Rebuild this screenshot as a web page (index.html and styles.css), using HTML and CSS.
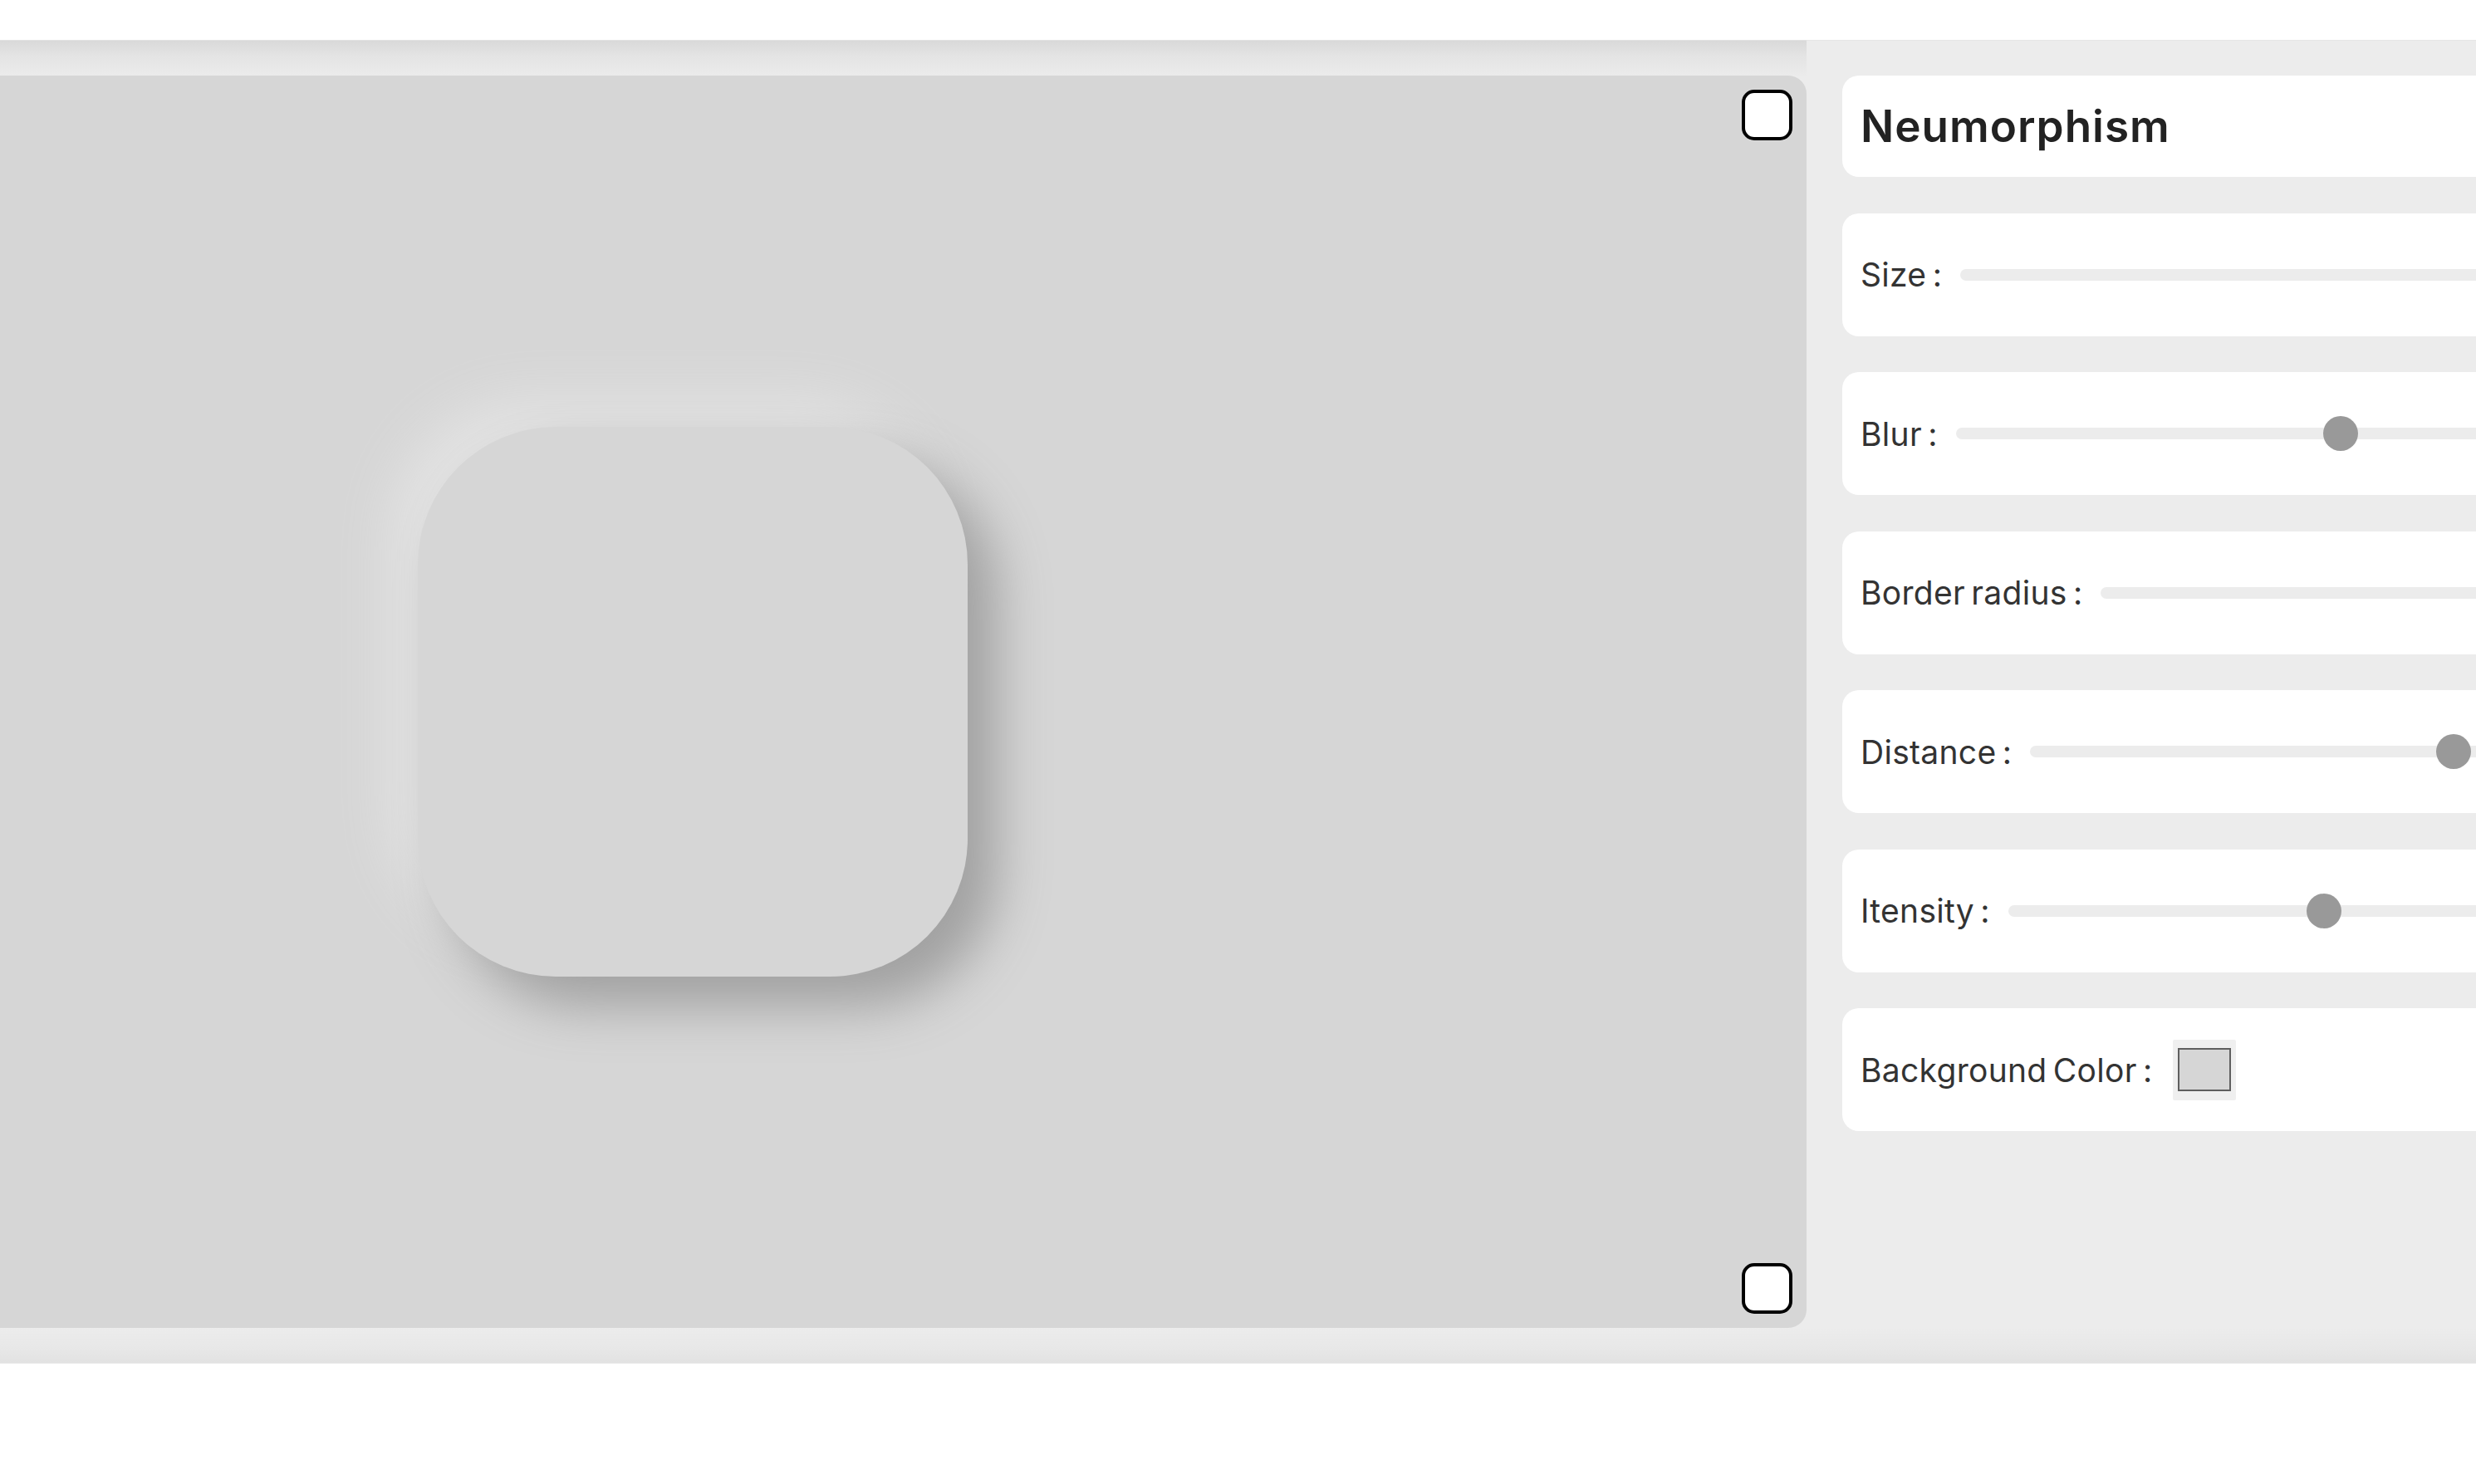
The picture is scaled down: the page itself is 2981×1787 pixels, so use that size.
FILE: index.html
```html
<!DOCTYPE html>
<html lang="en">
<head>
<meta charset="utf-8">
<title>Neumorphism</title>
<link rel="stylesheet" href="styles.css">
</head>
<body>
<div class="app">
  <div class="shade-top"></div>
  <div class="shade-top-right"></div>
  <main class="stage">
    <div class="neu"></div>
    <input type="checkbox" class="corner corner-top" aria-label="top corner">
    <input type="checkbox" class="corner corner-bottom" aria-label="bottom corner">
  </main>
  <aside class="panel">
    <div class="card card-title"><h1 class="title">Neumorphism</h1></div>
    <div class="card"><label class="label">Size :</label><input class="slider" type="range" min="0" max="1000" value="800"></div>
    <div class="card"><label class="label">Blur :</label><input class="slider" type="range" min="0" max="1000" value="516"></div>
    <div class="card"><label class="label">Border radius :</label><input class="slider" type="range" min="0" max="1000" value="700"></div>
    <div class="card"><label class="label">Distance :</label><input class="slider" type="range" min="0" max="1000" value="570"></div>
    <div class="card"><label class="label">Itensity :</label><input class="slider" type="range" min="0" max="1000" value="418"></div>
    <div class="card"><label class="label label-color">Background Color :</label><input class="swatch" type="color" value="#d6d6d6"></div>
  </aside>
  <div class="shade-bottom"></div>
</div>
</body>
</html>
```

FILE: styles.css
```css
html, body {
  margin: 0;
  padding: 0;
  background: #ffffff;
  overflow: hidden;
}

body {
  font-family: "Inter", "Open Sans", sans-serif;
  width: 2981px;
  height: 1787px;
}

.app {
  margin-top: 48px;
  display: grid;
  grid-template-columns: 2175px 1400px;
  grid-template-rows: 43px 1508px 43px;
  background: #ececec;
  width: 3575px;
}

.shade-top {
  background: linear-gradient(to bottom, #d9d9d9 0%, #e4e4e4 45%, #ebebeb 100%);
  border-top: 1px solid #e2e2e2;
}

.shade-top-right {
  background: #ececec;
  border-top: 1px solid #e6e6e6;
}

.shade-bottom {
  grid-column: 1 / span 2;
  background: linear-gradient(to bottom, #ececec 0%, #e8e8e8 55%, #e2e2e2 100%);
  border-bottom: 1px solid #e6e6e6;
}

.stage {
  position: relative;
  background: #d6d6d6;
  border-radius: 0 22px 22px 0;
  display: flex;
  align-items: center;
  padding-left: 503px;
}

.neu {
  width: 662px;
  height: 662px;
  border-radius: 166px;
  background: #d6d6d6;
  box-shadow: 36px 36px 62px #a1a1a1, -36px -36px 62px #e2e2e2;
}

.corner {
  -webkit-appearance: none;
  appearance: none;
  position: absolute;
  right: 17px;
  width: 61px;
  height: 61px;
  margin: 0;
  box-sizing: border-box;
  border: 4px solid #000000;
  border-radius: 15px;
  background: #ffffff;
}

.corner-top { top: 17px; }
.corner-bottom { bottom: 17px; }

.panel {
  padding-left: 43px;
  display: flex;
  flex-direction: column;
  gap: 43.5px;
}

.card {
  height: 148px;
  background: #ffffff;
  border-radius: 20px;
  display: flex;
  align-items: center;
  padding-left: 22px;
}

.card-title {
  height: 122px;
}

.title {
  margin: 0;
  font-size: 53px;
  font-weight: 600;
  color: #222222;
  letter-spacing: 1px;
}

.label {
  flex: none;
  font-size: 39px;
  color: #333333;
  letter-spacing: 0.3px;
  word-spacing: -4px;
  margin-right: 22px;
  white-space: nowrap;
}

.label-color {
  margin-right: 24px;
}

.slider {
  flex: none;
  -webkit-appearance: none;
  appearance: none;
  width: 900px;
  height: 14px;
  margin: 0;
  border-radius: 7px;
  background: #ececec;
  outline: none;
}

.slider::-webkit-slider-thumb {
  -webkit-appearance: none;
  appearance: none;
  width: 42px;
  height: 42px;
  border-radius: 50%;
  background: #999999;
  border: none;
}

.swatch {
  flex: none;
  -webkit-appearance: none;
  appearance: none;
  width: 76px;
  height: 73px;
  margin: 0;
  padding: 0;
  border: none;
  background: #efefef;
  border-radius: 2px;
}

.swatch::-webkit-color-swatch-wrapper {
  padding: 10px 6px 11px 6px;
}

.swatch::-webkit-color-swatch {
  border: 2px solid #5f5f5f;
  border-radius: 0;
}
```
